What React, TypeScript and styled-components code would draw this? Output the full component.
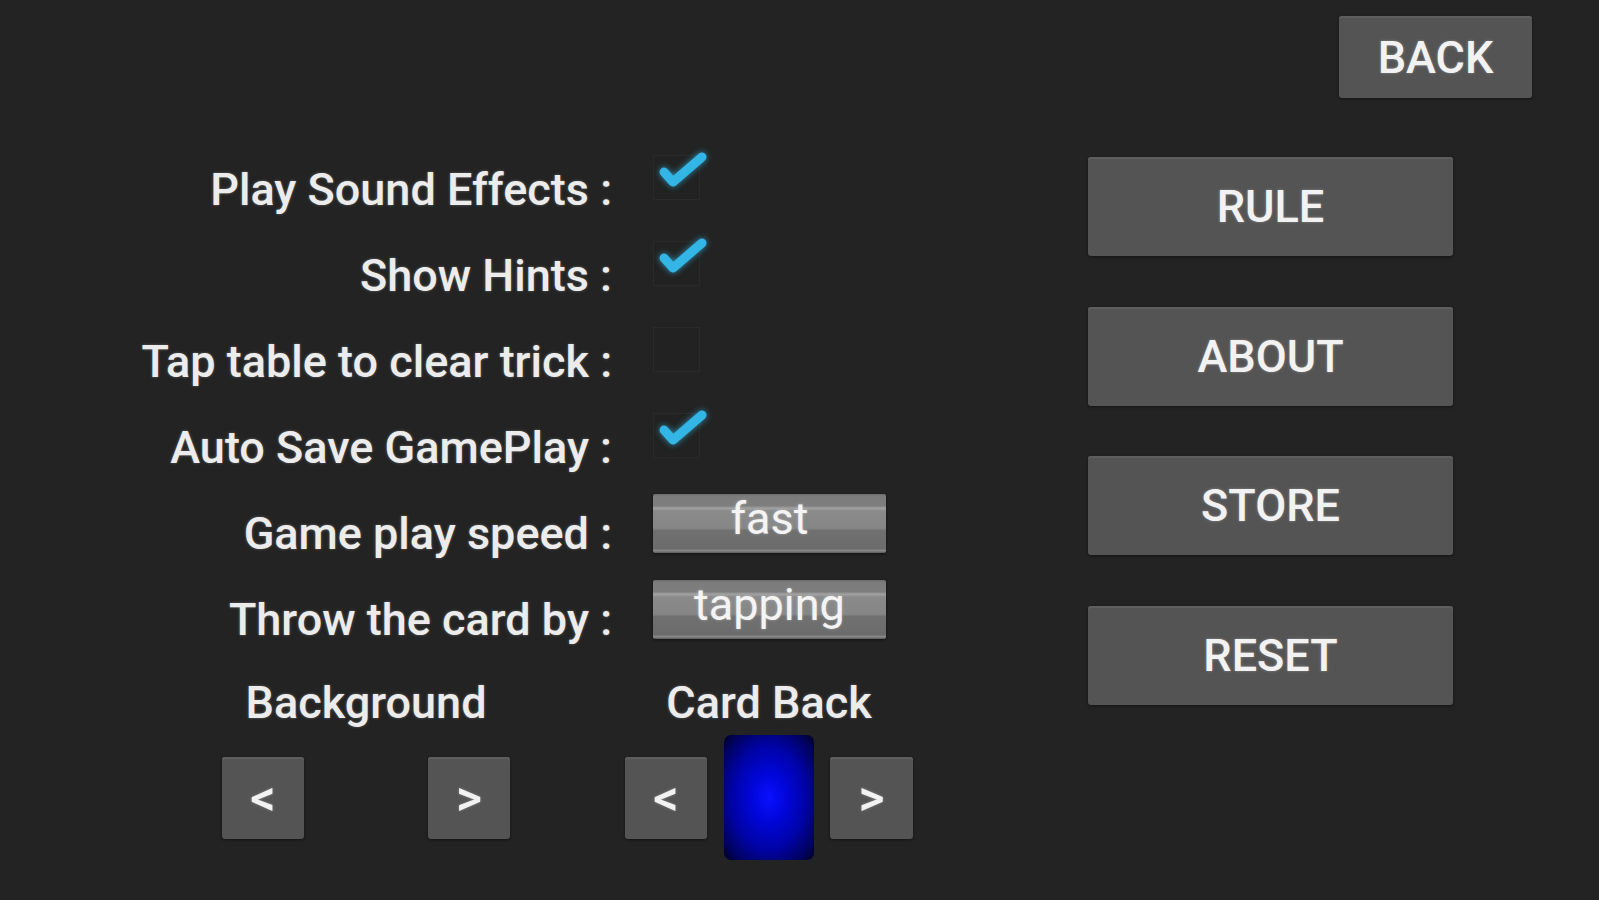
import React from 'react';
import styled, { createGlobalStyle } from 'styled-components';

const GlobalStyle = createGlobalStyle`
  html, body {
    margin: 0;
    padding: 0;
    background: #222322;
  }
  body {
    font-family: Roboto, "Noto Sans", sans-serif;
    color: #ececec;
  }
`;

const Screen = styled.div`
  width: 1599px;
  height: 900px;
  box-sizing: border-box;
  background: #222322;
  display: flex;
  flex-direction: column;
  padding-top: 16px;
  overflow: hidden;
`;

const TopBar = styled.div`
  display: flex;
  justify-content: flex-end;
  padding-right: 67px;
`;

const Main = styled.div`
  display: flex;
  margin-top: 48px;
`;

const LeftPane = styled.div`
  width: 1088px;
  display: flex;
  flex-direction: column;
`;

const RightPane = styled.div`
  display: flex;
  flex-direction: column;
  gap: 50.5px;
  padding-top: 11px;
`;

const GreyButton = styled.div<{ $w: number; $h: number; $big?: boolean }>`
  width: ${p => p.$w}px;
  height: ${p => p.$h}px;
  box-sizing: border-box;
  background: #545454;
  border-radius: 3px;
  box-shadow: inset 0 2px 0 #5e5e5e, 0 1px 3px rgba(0, 0, 0, 0.45);
  display: flex;
  align-items: center;
  justify-content: center;
  color: #f2f2f2;
  font-size: ${p => (p.$big ? 50 : 45)}px;
  font-weight: 500;
  text-shadow: 0 0 3px rgba(255, 255, 255, 0.3);
`;

const Settings = styled.div`
  display: grid;
  grid-template-columns: 612px 1fr;
  grid-auto-rows: 86px;
  column-gap: 41px;
  align-items: center;
`;

const Label = styled.div`
  text-align: right;
  font-size: 45px;
  font-weight: 500;
  white-space: nowrap;
  color: #ececec;
  text-shadow: 0 0 3px rgba(255, 255, 255, 0.3);
`;

const CheckBox = styled.span`
  position: relative;
  display: block;
  width: 47px;
  height: 45px;
  box-sizing: border-box;
  border: 1px solid #292a29;
  background: #212221;
  margin-bottom: 24px;

  svg {
    position: absolute;
    left: -1px;
    top: -1px;
    overflow: visible;
    filter: drop-shadow(0 0 3px rgba(51, 181, 229, 0.75));
  }
`;

const Spinner = styled.div`
  width: 233px;
  height: 59px;
  margin-bottom: 19px;
  border-radius: 2px;
  background: linear-gradient(
    to bottom,
    #6c6c6c 0%,
    #7c7c7c 4%,
    #7e7e7e 20%,
    #a2a2a2 24%,
    #8a8a8a 29%,
    #868686 58%,
    #707070 62%,
    #6c6c6c 93%,
    #8a8a8a 96%,
    #5a5a5a 100%
  );
  box-shadow: 0 1px 3px rgba(0, 0, 0, 0.5);
  display: flex;
  justify-content: center;
  font-size: 45px;
  line-height: 50px;
  color: #f4f4f4;
  text-shadow: 0 0 3px rgba(255, 255, 255, 0.35);
`;

const Pickers = styled.div`
  display: grid;
  grid-template-columns: 288px 288px;
  column-gap: 115px;
  padding-left: 222px;
  padding-top: 16px;
`;

const Picker = styled.div`
  display: flex;
  flex-direction: column;
  align-items: center;
`;

const PickerTitle = styled.div`
  font-size: 45px;
  font-weight: 500;
  line-height: 50px;
  height: 50px;
  white-space: nowrap;
  color: #ececec;
  text-shadow: 0 0 3px rgba(255, 255, 255, 0.3);
`;

const PickerRow = styled.div`
  width: 100%;
  height: 125px;
  margin-top: 7px;
  display: flex;
  align-items: center;
  justify-content: space-between;
`;

const CardBack = styled.div`
  width: 90px;
  height: 125px;
  border-radius: 7px;
  background: radial-gradient(
    ellipse farthest-corner at 50% 50%,
    #0a10ff 0%,
    #0006d8 28%,
    #0003a6 58%,
    #00025c 85%,
    #00001e 100%
  );
`;

const Check = ({ on }: { on: boolean }) => (
  <CheckBox>
    {on && (
      <svg width="47" height="45" viewBox="0 0 47 45">
        <path
          d="M11 17 L20 27 L49 2"
          fill="none"
          stroke="#33b5e5"
          strokeWidth="9"
          strokeLinecap="round"
          strokeLinejoin="round"
        />
      </svg>
    )}
  </CheckBox>
);

const options = [
  { label: 'Play Sound Effects :', check: true },
  { label: 'Show Hints :', check: true },
  { label: 'Tap table to clear trick :', check: false },
  { label: 'Auto Save GamePlay :', check: true },
];

const menu = ['RULE', 'ABOUT', 'STORE', 'RESET'];

export default function App() {
  return (
    <>
      <GlobalStyle />
      <Screen>
        <TopBar>
          <GreyButton $w={193} $h={82}>BACK</GreyButton>
        </TopBar>
        <Main>
          <LeftPane>
            <Settings>
              {options.map(o => (
                <React.Fragment key={o.label}>
                  <Label>{o.label}</Label>
                  <Check on={o.check} />
                </React.Fragment>
              ))}
              <Label>Game play speed :</Label>
              <Spinner>fast</Spinner>
              <Label>Throw the card by :</Label>
              <Spinner>tapping</Spinner>
            </Settings>
            <Pickers>
              <Picker>
                <PickerTitle>Background</PickerTitle>
                <PickerRow>
                  <GreyButton $w={82} $h={82} $big>&lt;</GreyButton>
                  <GreyButton $w={82} $h={82} $big>&gt;</GreyButton>
                </PickerRow>
              </Picker>
              <Picker>
                <PickerTitle>Card Back</PickerTitle>
                <PickerRow>
                  <GreyButton $w={82} $h={82} $big>&lt;</GreyButton>
                  <CardBack />
                  <GreyButton $w={83} $h={82} $big>&gt;</GreyButton>
                </PickerRow>
              </Picker>
            </Pickers>
          </LeftPane>
          <RightPane>
            {menu.map(m => (
              <GreyButton key={m} $w={365} $h={99}>{m}</GreyButton>
            ))}
          </RightPane>
        </Main>
      </Screen>
    </>
  );
}
